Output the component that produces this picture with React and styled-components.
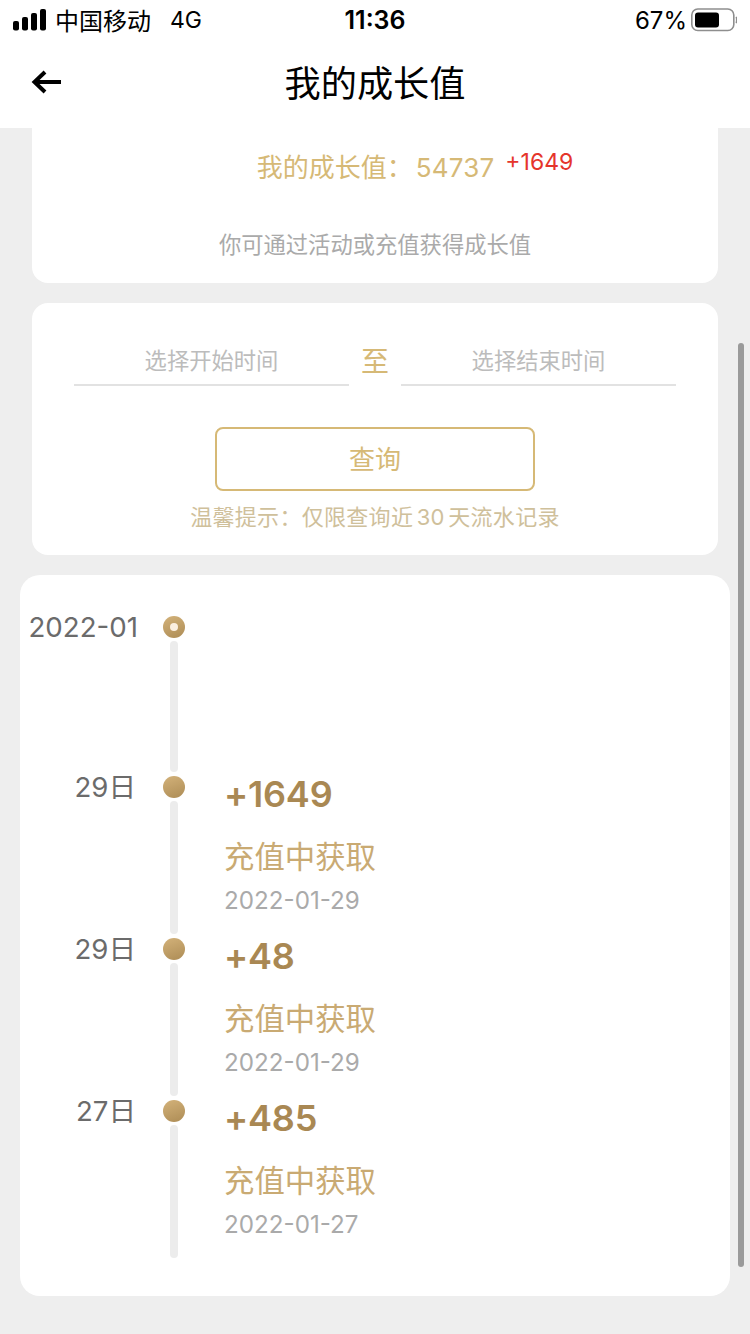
import styled, { createGlobalStyle } from "styled-components";

const records = [
	{ day: "29日", amount: "+1649", date: "2022-01-29" },
	{ day: "29日", amount: "+48", date: "2022-01-29" },
	{ day: "27日", amount: "+485", date: "2022-01-27" },
];

const App = () => {
	return (
		<Page>
			<GlobalStyle />
			<StatusBar>
				<Carrier>
					<svg width="34" height="22" viewBox="0 0 34 22">
						<rect x="0" y="12" width="6" height="9.5" rx="2" fill="#000" />
						<rect x="9" y="8" width="6" height="13.5" rx="2" fill="#000" />
						<rect x="18" y="4" width="6" height="17.5" rx="2" fill="#000" />
						<rect x="27" y="0" width="6" height="21.5" rx="2" fill="#000" />
					</svg>
					<span>中国移动</span>
					<Network>4G</Network>
				</Carrier>
				<Clock>11:36</Clock>
				<Battery>
					<span>67%</span>
					<svg width="46" height="24" viewBox="0 0 46 24">
						<rect x="0.8" y="1" width="42" height="21.5" rx="6" fill="none" stroke="#8e8e8e" strokeWidth="1.6" />
						<rect x="4" y="4.5" width="24" height="15" rx="3" fill="#000" />
						<path d="M45 9 C46 10 46 14 45 15" fill="none" stroke="#8e8e8e" strokeWidth="1.6" />
					</svg>
				</Battery>
			</StatusBar>
			<NavBar>
				<BackIcon width="32" height="26" viewBox="0 0 32 26">
					<path d="M30 13 H5 M14 3 L3.5 13 L14 23" fill="none" stroke="#000" strokeWidth="4" />
				</BackIcon>
				<Title>我的成长值</Title>
			</NavBar>
			<Content>
				<SummaryCard>
					<Total>
						我的成长值：<TotalNumber>54737</TotalNumber>
						<Delta>+1649</Delta>
					</Total>
					<Hint>你可通过活动或充值获得成长值</Hint>
				</SummaryCard>
				<QueryCard>
					<DateRange>
						<DateField>选择开始时间</DateField>
						<To>至</To>
						<DateField>选择结束时间</DateField>
					</DateRange>
					<QueryButton>查询</QueryButton>
					<Tip>温馨提示：仅限查询近 30 天流水记录</Tip>
				</QueryCard>
				<TimelinePanel>
					<Row $height={160}>
						<Label>
							<MonthText>2022-01</MonthText>
						</Label>
						<Rail>
							<Dot $month />
							<Line />
						</Rail>
					</Row>
					{records.map((item, i) => (
						<Row key={i} $height={162}>
							<Label>
								<DayText>{item.day}</DayText>
							</Label>
							<Rail>
								<Dot />
								<Line />
							</Rail>
							<Record>
								<Amount>{item.amount}</Amount>
								<Source>充值中获取</Source>
								<RecordDate>{item.date}</RecordDate>
							</Record>
						</Row>
					))}
				</TimelinePanel>
			</Content>
			<ScrollThumb />
		</Page>
	);
};

const GlobalStyle = createGlobalStyle`
	html, body {
		margin: 0;
		padding: 0;
		background: #eeeeee;
	}
	* {
		box-sizing: border-box;
	}
`;

const Page = styled.div`
	position: relative;
	width: 750px;
	height: 1334px;
	overflow: hidden;
	background: #eeeeee;
	font-family: Inter, "Noto Sans CJK SC", sans-serif;
`;

const StatusBar = styled.div`
	height: 40px;
	padding: 0 0 0 13px;
	display: grid;
	grid-template-columns: 1fr auto 1fr;
	align-items: center;
	background: #fff;
	color: #000;
	font-size: 24px;
`;

const Carrier = styled.div`
	display: flex;
	align-items: center;
	gap: 8px;
	padding-bottom: 1px;
	font-size: 24px;
`;

const Network = styled.span`
	margin-left: 11px;
	font-size: 23px;
`;

const Clock = styled.div`
	margin-left: -13px;
	font-size: 25px;
	font-weight: 600;
`;

const Battery = styled.div`
	display: flex;
	align-items: center;
	justify-content: flex-end;
	gap: 4px;
	padding-right: 13px;
`;

const NavBar = styled.div`
	position: relative;
	height: 88px;
	display: flex;
	align-items: center;
	justify-content: center;
	background: #fff;
	padding-bottom: 6px;
`;

const BackIcon = styled.svg`
	position: absolute;
	left: 31px;
	top: 29px;
`;

const Title = styled.div`
	font-size: 36.2px;
	color: #000;
`;

const Content = styled.div`
	display: flex;
	flex-direction: column;
	align-items: center;
`;

const Card = styled.div`
	width: 686px;
	background: #fff;
`;

const SummaryCard = styled(Card)`
	height: 155px;
	border-radius: 0 0 16px 16px;
	display: flex;
	flex-direction: column;
	align-items: center;
	padding-top: 21px;
`;

const Total = styled.div`
	display: flex;
	align-items: flex-start;
	padding-left: 80px;
	height: 38px;
	line-height: 38px;
	font-size: 26px;
	color: #d6b976;
`;

const TotalNumber = styled.span`
	margin-left: 3px;
	letter-spacing: 0.2px;
`;

const Delta = styled.span`
	margin-left: 11px;
	margin-top: -6px;
	font-size: 23px;
	color: #e5352b;
`;

const Hint = styled.div`
	margin-top: 42px;
	font-size: 22.3px;
	line-height: 32px;
	color: #aaaaaa;
`;

const QueryCard = styled(Card)`
	height: 252px;
	margin-top: 20px;
	border-radius: 16px;
	display: flex;
	flex-direction: column;
	align-items: center;
	padding-top: 38px;
`;

const DateRange = styled.div`
	width: 602px;
	display: flex;
	align-items: flex-end;
	justify-content: space-between;
`;

const DateField = styled.div`
	width: 275px;
	height: 45px;
	line-height: 40px;
	text-align: center;
	font-size: 22.3px;
	color: #bcbcbc;
	border-bottom: 2px solid #e2e2e2;
`;

const To = styled.div`
	font-size: 28px;
	line-height: 42px;
	height: 45px;
	color: #d6b976;
`;

const QueryButton = styled.button`
	width: 320px;
	height: 64px;
	margin-top: 41px;
	padding: 0 0 4px;
	border: 2px solid #d6b976;
	border-radius: 8px;
	background: #fff;
	color: #d6b976;
	font-family: inherit;
	font-size: 26px;
`;

const Tip = styled.div`
	margin-top: 10px;
	font-size: 22px;
	line-height: 32px;
	color: #cfc09b;
	letter-spacing: 0.3px;
	word-spacing: -3px;
`;

const TimelinePanel = styled.div`
	width: 710px;
	height: 721px;
	margin-top: 20px;
	padding-top: 41px;
	border-radius: 20px;
	background: #fff;
`;

const Row = styled.div`
	display: flex;
	height: ${(p) => p.$height}px;
`;

const Label = styled.div`
	width: 143px;
	display: flex;
	justify-content: flex-end;
	align-items: flex-start;
`;

const MonthText = styled.div`
	margin-right: 25px;
	font-size: 27.7px;
	line-height: 22px;
	color: #6b6b6b;
	white-space: nowrap;
`;

const DayText = styled.div`
	margin-right: 27px;
	font-size: 27.6px;
	line-height: 22px;
	color: #6b6b6b;
	white-space: nowrap;
`;

const Rail = styled.div`
	width: 22px;
	display: flex;
	flex-direction: column;
	align-items: center;
`;

const Dot = styled.div`
	position: relative;
	flex: none;
	width: 22px;
	height: 22px;
	border-radius: 50%;
	background: linear-gradient(160deg, #d3b27a, #ad8c55);
	&::after {
		content: "";
		display: ${(p) => (p.$month ? "block" : "none")};
		position: absolute;
		left: 7px;
		top: 7px;
		width: 8px;
		height: 8px;
		border-radius: 50%;
		background: #fbefe0;
	}
`;

const Line = styled.div`
	flex: 1;
	width: 8px;
	margin: 3px 0 4px;
	border-radius: 4px;
	background: #ececec;
`;

const Record = styled.div`
	margin-left: 39px;
	display: flex;
	flex-direction: column;
`;

const Amount = styled.div`
	height: 44px;
	margin-top: -4px;
	font-size: 36px;
	line-height: 44px;
	font-weight: 600;
	letter-spacing: -0.2px;
	color: #a98853;
`;

const Source = styled.div`
	margin-top: 20px;
	font-size: 30.4px;
	line-height: 42px;
	color: #c9aa73;
`;

const RecordDate = styled.div`
	margin-top: 8px;
	font-size: 24.2px;
	line-height: 30px;
	color: #aaaaaa;
`;

const ScrollThumb = styled.div`
	position: absolute;
	left: 738px;
	top: 343px;
	width: 6px;
	height: 924px;
	border-radius: 3px;
	background: #9a9a9a;
`;

export default App;
